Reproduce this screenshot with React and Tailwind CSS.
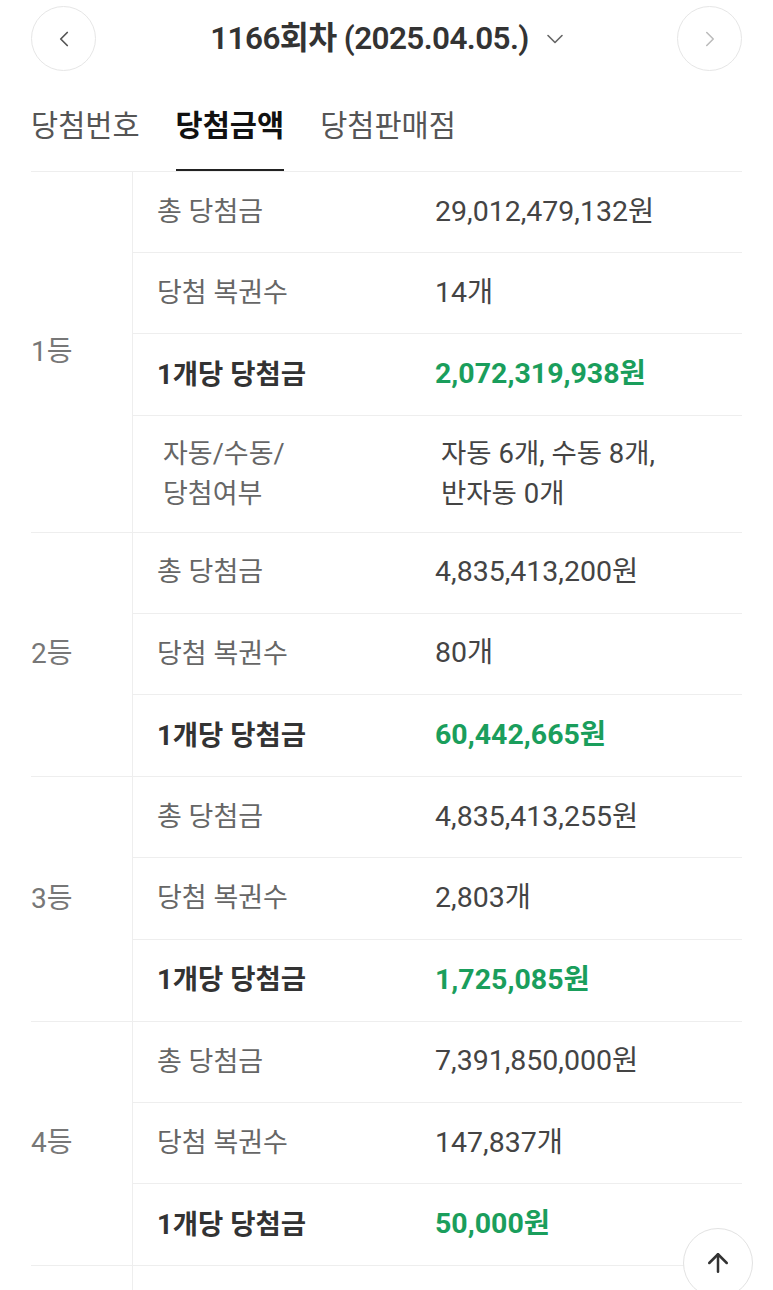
import { ChevronLeft, ChevronRight, ChevronDown, ArrowUp } from "lucide-react";

const groups = [
  {
    rank: "1등",
    rows: [
      { label: "총 당첨금", value: "29,012,479,132원" },
      { label: "당첨 복권수", value: "14개" },
      { label: "1개당 당첨금", value: "2,072,319,938원", strong: true },
      { label: "자동/수동/\n당첨여부", value: "자동 6개, 수동 8개,\n반자동 0개", tall: true },
    ],
  },
  {
    rank: "2등",
    rows: [
      { label: "총 당첨금", value: "4,835,413,200원" },
      { label: "당첨 복권수", value: "80개" },
      { label: "1개당 당첨금", value: "60,442,665원", strong: true },
    ],
  },
  {
    rank: "3등",
    rows: [
      { label: "총 당첨금", value: "4,835,413,255원" },
      { label: "당첨 복권수", value: "2,803개" },
      { label: "1개당 당첨금", value: "1,725,085원", strong: true },
    ],
  },
  {
    rank: "4등",
    rows: [
      { label: "총 당첨금", value: "7,391,850,000원" },
      { label: "당첨 복권수", value: "147,837개" },
      { label: "1개당 당첨금", value: "50,000원", strong: true },
    ],
  },
  // 5등 is below the fold, only its borders show
  { rank: "", rows: [{ label: "", value: "" }] },
];

function Row({ row, last }) {
  if (row.tall) {
    return (
      <div className={`flex h-[116px] items-center ${last ? "" : "border-b border-[#eeeeee]"}`}>
        <div className="w-[278px] whitespace-pre-line pl-[30px] text-[27px] leading-[40px] text-[#666666]">
          {row.label}
        </div>
        <div className="whitespace-pre-line pl-[30px] text-[27.5px] leading-[40px] text-[#444444]">
          {row.value}
        </div>
      </div>
    );
  }
  return (
    <div className={`flex h-[81.2px] items-center ${last ? "" : "border-b border-[#eeeeee]"}`}>
      <div
        className={`w-[278px] pl-[24px] ${
          row.strong ? "text-[27.5px] font-bold text-[#333333]" : "text-[27px] text-[#666666]"
        }`}
      >
        {row.label}
      </div>
      <div
        className={`pl-[24px] text-[28.5px] ${
          row.strong ? "font-bold text-[#1a9e5c]" : "text-[#444444]"
        }`}
      >
        {row.value}
      </div>
    </div>
  );
}

export default function App() {
  return (
    <div
      className="relative h-[1290px] overflow-hidden bg-white px-[31px]"
      style={{ fontFamily: '"Roboto", "Noto Sans CJK KR", sans-serif' }}
    >
      {/* header */}
      <div className="flex h-[77px] items-start justify-between pt-[6px]">
        <button className="flex h-[65px] w-[65px] items-center justify-center rounded-full border border-[#e6e6e6]">
          <ChevronLeft size={26} strokeWidth={1.6} className="text-[#555555]" />
        </button>
        <div className="flex h-[65px] items-center gap-[12px] pl-[6px]">
          <span className="text-[31.5px] font-semibold tracking-[-0.6px] text-[#333333]">
            1166회차 (2025.04.05.)
          </span>
          <ChevronDown size={28} strokeWidth={1.4} className="text-[#666666]" />
        </div>
        <button className="flex h-[65px] w-[65px] items-center justify-center rounded-full border border-[#e6e6e6]">
          <ChevronRight size={26} strokeWidth={1.4} className="text-[#bbbbbb]" />
        </button>
      </div>

      {/* tabs */}
      <div className="flex h-[94px] items-end gap-[36px]">
        <div className="flex h-full items-center pt-[4px] text-[29.5px] text-[#555555]">당첨번호</div>
        <div className="flex h-full items-center border-b-2 border-[#222222] pt-[6px] text-[29.5px] font-bold text-[#111111]">
          당첨금액
        </div>
        <div className="flex h-full items-center pt-[4px] text-[29.5px] text-[#555555]">당첨판매점</div>
      </div>

      {/* table */}
      <div className="border-t border-[#eeeeee]">
        {groups.map((g, gi) => (
          <div key={gi} className="flex border-b border-[#eeeeee]">
            <div className="flex w-[102px] items-center border-r border-[#eeeeee] text-[28px] text-[#777777]">
              {g.rank}
            </div>
            <div className="flex-1">
              {g.rows.map((r, i) => (
                <Row key={i} row={r} last={i === g.rows.length - 1} />
              ))}
            </div>
          </div>
        ))}
      </div>

      {/* scroll to top */}
      <button className="absolute left-[683px] top-[1228px] flex h-[70px] w-[70px] items-center justify-center rounded-full border border-[#e2e2e2] bg-white">
        <ArrowUp size={30} strokeWidth={2} className="text-[#333333]" />
      </button>
    </div>
  );
}
